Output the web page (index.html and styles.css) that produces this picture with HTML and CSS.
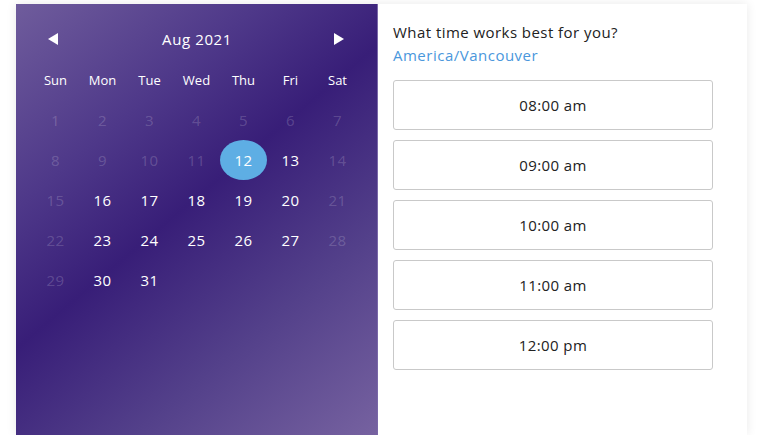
FILE: index.html
```html
<!DOCTYPE html>
<html>
<head>
<meta charset="utf-8">
<link rel="stylesheet" href="styles.css">
</head>
<body>
<div class="card">
  <div class="calendar">
    <div class="cal-header">
      <span class="arrow arrow-left"></span>
      <span class="month">Aug 2021</span>
      <span class="arrow arrow-right"></span>
    </div>
    <div class="grid">
      <div class="wd">Sun</div><div class="wd">Mon</div><div class="wd">Tue</div><div class="wd">Wed</div><div class="wd">Thu</div><div class="wd">Fri</div><div class="wd">Sat</div>
      <div class="day off">1</div><div class="day off">2</div><div class="day off">3</div><div class="day off">4</div><div class="day off">5</div><div class="day off">6</div><div class="day off">7</div>
      <div class="day off">8</div><div class="day off">9</div><div class="day off">10</div><div class="day off">11</div><div class="day sel">12</div><div class="day">13</div><div class="day off">14</div>
      <div class="day off">15</div><div class="day">16</div><div class="day">17</div><div class="day">18</div><div class="day">19</div><div class="day">20</div><div class="day off">21</div>
      <div class="day off">22</div><div class="day">23</div><div class="day">24</div><div class="day">25</div><div class="day">26</div><div class="day">27</div><div class="day off">28</div>
      <div class="day off">29</div><div class="day">30</div><div class="day">31</div>
    </div>
  </div>
  <div class="times">
    <div class="question">What time works best for you?</div>
    <div class="tz">America/Vancouver</div>
    <div class="slots">
      <button class="slot">08:00 am</button>
      <button class="slot">09:00 am</button>
      <button class="slot">10:00 am</button>
      <button class="slot">11:00 am</button>
      <button class="slot">12:00 pm</button>
    </div>
  </div>
</div>
</body>
</html>
```
FILE: styles.css
```css
html, body {
  margin: 0;
  padding: 0;
  background: #ffffff;
  font-family: "Open Sans", "Lato", sans-serif;
}
body {
  padding: 4px 0 0 16px;
}
.card {
  display: flex;
  width: 731px;
  height: 431px;
  background: #fff;
  box-shadow: 0 0 10px rgba(0, 0, 0, 0.09);
}
.calendar {
  width: 362px;
  box-sizing: border-box;
  padding: 15px 17px 0 16px;
  background: linear-gradient(140deg, #6f5c9c 0%, #4e3889 28%, #381e78 47%, #53408a 72%, #7662a0 100%);
  border-right: 1px solid #7a68a8;
  color: #fff;
}
.cal-header {
  height: 40px;
  display: flex;
  align-items: center;
  justify-content: space-between;
  padding: 0 16px 0 16px;
}
.arrow {
  width: 0;
  height: 0;
  border-top: 6px solid transparent;
  border-bottom: 6px solid transparent;
}
.arrow-left { border-right: 10px solid #fff; }
.arrow-right { border-left: 10px solid #fff; }
.month {
  font-size: 15px;
  font-weight: 500;
  letter-spacing: 0.6px;
  padding-left: 2px;
}
.grid {
  display: grid;
  grid-template-columns: repeat(7, 47px);
  grid-auto-rows: 40px;
  margin-top: 1px;
}
.wd, .day {
  display: flex;
  align-items: center;
  justify-content: center;
}
.wd {
  font-size: 13px;
  font-weight: 500;
  padding-bottom: 1px;
}
.day {
  font-size: 15px;
  font-weight: 500;
  letter-spacing: 0.3px;
}
.day.off {
  color: rgba(255, 255, 255, 0.18);
}
.day.sel {
  background: #5eaee4;
  border-radius: 50%;
}
.times {
  flex: 1;
  padding: 18px 0 0 15px;
  color: #222;
}
.question {
  font-size: 15px;
  line-height: 20px;
  letter-spacing: 0.45px;
}
.tz {
  font-size: 15px;
  line-height: 20px;
  letter-spacing: 0.5px;
  margin-top: 3px;
  color: #4a97dc;
}
.slots {
  display: flex;
  flex-direction: column;
  gap: 10px;
  margin-top: 15px;
}
.slot {
  width: 320px;
  height: 50px;
  background: #fff;
  border: 1px solid #c9c9c9;
  border-radius: 3px;
  font-family: inherit;
  font-size: 15px;
  letter-spacing: 0.4px;
  color: #222;
  padding: 0;
}
```
